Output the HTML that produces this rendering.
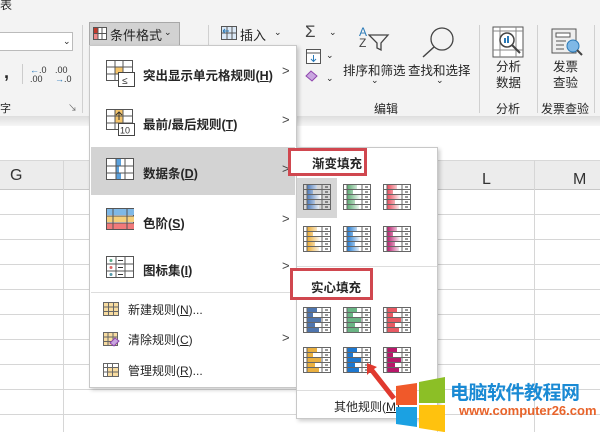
<!DOCTYPE html>
<html><head><meta charset="utf-8"><style>
*{margin:0;padding:0;box-sizing:border-box}
body{width:600px;height:432px;overflow:hidden;position:relative;background:#fff;font-family:"Liberation Sans","Noto Sans CJK SC",sans-serif;color:#262626}
.a{position:absolute}
.t{position:absolute;font-size:12px;white-space:nowrap}
.b{font-weight:bold;font-size:12.5px}
.arr{position:absolute;font-size:13px;color:#444;left:282px}
</style></head><body>
<!-- ribbon -->
<div class="a" style="left:0;top:0;width:600px;height:120px;background:#f3f3f3"></div>
<div class="a" style="left:0;top:116px;width:600px;height:10px;background:linear-gradient(#dedede,#f6f6f6)"></div>
<div class="t" style="left:0;top:-4px;font-size:12px">表</div>
<div class="a" style="left:0;top:32px;width:73px;height:19px;background:#fff;border:1px solid #bbb;border-left:none"></div>
<div class="t" style="left:63px;top:36px;font-size:9px">⌄</div>
<div class="t" style="left:4px;top:62px;font-size:18px;font-weight:bold">,</div>
<div class="a" style="left:22px;top:64px;width:1px;height:20px;background:#ccc"></div>
<div class="t" style="left:30px;top:66px;font-size:9px;line-height:9px;color:#333"><span style="color:#2a7ab8">←</span>.0<br>.00</div>
<div class="t" style="left:55px;top:66px;font-size:9px;line-height:9px;color:#333">.00<br><span style="color:#2a7ab8">→</span>.0</div>
<div class="t" style="left:0;top:100px;font-size:11px">字</div>
<div class="t" style="left:68px;top:101px;font-size:9px;color:#666">↘</div>
<div class="a" style="left:82px;top:25px;width:1px;height:88px;background:#d0d0d0"></div>
<div class="a" style="left:208px;top:25px;width:1px;height:88px;background:#d0d0d0"></div>
<div class="a" style="left:89px;top:22px;width:91px;height:24px;background:#d2d2d2;border:1px solid #a8a8a8"></div>
<svg class="a" style="left:93px;top:27px" width="14" height="13"><rect x=".5" y=".5" width="13" height="12" fill="#fff" stroke="#555"/><rect x="1" y="1" width="4" height="5" fill="#c0392b"/><rect x="1" y="7" width="4" height="5" fill="#e88"/><path d="M5 1v12M9 1v12M1 6.5h13" stroke="#555"/></svg>
<div class="t" style="left:110px;top:25px;font-size:13px">条件格式</div>
<div class="t" style="left:164px;top:27px;font-size:9px">⌄</div>
<svg class="a" style="left:221px;top:26px" width="16" height="14"><rect x=".5" y=".5" width="15" height="13" fill="#dbe9f7" stroke="#555"/><path d="M6 1v13M11 1v13M1 7h15" stroke="#555"/><path d="M2 5h6M2 5l2-2M2 5l2 2" stroke="#2a7ab8" fill="none"/></svg>
<div class="t" style="left:240px;top:25px;font-size:13px">插入</div>
<div class="t" style="left:274px;top:27px;font-size:9px">⌄</div>
<div class="t" style="left:305px;top:22px;font-size:17px;color:#444">Σ</div><div class="t" style="left:329px;top:27px;font-size:9px">⌄</div>
<svg class="a" style="left:306px;top:49px" width="15" height="15"><rect x=".5" y=".5" width="14" height="14" fill="#fff" stroke="#555"/><path d="M1 4h14" stroke="#555"/><path d="M7.5 6v6M5 10l2.5 2.5L10 10" stroke="#2a7ab8" fill="none"/></svg><div class="t" style="left:326px;top:50px;font-size:9px">⌄</div>
<svg class="a" style="left:305px;top:70px" width="16" height="12"><path d="M1 6l5-5 6 5-5 5z" fill="#c9a6e0" stroke="#8e44ad"/></svg><div class="t" style="left:326px;top:73px;font-size:9px">⌄</div>
<div class="t" style="left:359px;top:27px;font-size:12px;line-height:11px;color:#2a7ab8">A<br><span style="color:#444">Z</span></div>
<svg class="a" style="left:368px;top:34px" width="22" height="18"><path d="M1 1h19l-7 8v7l-4-2V9z" fill="none" stroke="#444" stroke-width="1.3"/></svg>
<svg class="a" style="left:420px;top:26px" width="36" height="32"><circle cx="22" cy="13" r="11" fill="none" stroke="#444" stroke-width="1.3"/><path d="M14 21L3 31" stroke="#444" stroke-width="1.5"/></svg>
<div class="t" style="left:343px;top:60px;font-size:12.5px">排序和筛选</div>
<div class="t" style="left:408px;top:60px;font-size:12.5px">查找和选择</div>
<div class="t" style="left:371px;top:75px;font-size:9px">⌄</div><div class="t" style="left:436px;top:75px;font-size:9px">⌄</div>
<div class="t" style="left:374px;top:100px;font-size:12px">编辑</div>
<div class="a" style="left:479px;top:25px;width:1px;height:88px;background:#d0d0d0"></div>
<svg class="a" style="left:492px;top:26px" width="34" height="32"><rect x="1" y="1" width="30" height="30" fill="#fff" stroke="#555"/><path d="M1 5h30M8 1v30M24 1v30M1 24h30" stroke="#888"/><circle cx="15" cy="14" r="7" fill="#fff" stroke="#444" stroke-width="1.5"/><rect x="12" y="12" width="2" height="5" fill="#2a7ab8"/><rect x="15" y="10" width="2" height="7" fill="#2a7ab8"/><path d="M20 19l8 8" stroke="#444" stroke-width="2"/></svg>
<div class="t" style="left:496px;top:59px;font-size:12.5px;line-height:16px;text-align:center">分析<br>数据</div>
<div class="t" style="left:496px;top:100px;font-size:12px">分析</div>
<div class="a" style="left:537px;top:25px;width:1px;height:88px;background:#d0d0d0"></div>
<svg class="a" style="left:551px;top:28px" width="34" height="28"><rect x="1" y="1" width="24" height="24" fill="#eee" stroke="#555"/><rect x="5" y="5" width="14" height="4" fill="#fff" stroke="#555"/><path d="M5 13h10M5 17h8M5 21h8" stroke="#555"/><circle cx="22" cy="18" r="6" fill="#7fb8e6" stroke="#2a7ab8"/><path d="M26 22l5 5" stroke="#444" stroke-width="2"/></svg>
<div class="t" style="left:553px;top:59px;font-size:12.5px;line-height:16px">发票<br>查验</div>
<div class="t" style="left:541px;top:100px;font-size:12px">发票查验</div>
<div class="a" style="left:594px;top:25px;width:1px;height:88px;background:#d0d0d0"></div>
<!-- sheet -->
<div class="a" style="left:0;top:160px;width:600px;height:30px;background:#ececec;border-top:1px solid #d8d8d8;border-bottom:1px solid #c8c8c8"></div>
<div class="t" style="left:10px;top:167px;font-size:16px;color:#333">G</div>
<div class="t" style="left:482px;top:171px;font-size:16px;color:#333">L</div>
<div class="t" style="left:573px;top:171px;font-size:16px;color:#333">M</div>
<div class="a" style="left:0;top:190px;width:600px;height:242px;background:repeating-linear-gradient(#fff 0 24px,#d6d6d6 24px 25px),#fff"></div>
<div class="a" style="left:63px;top:160px;width:1px;height:272px;background:#d6d6d6"></div>
<div class="a" style="left:437px;top:160px;width:1px;height:272px;background:#d6d6d6"></div>
<div class="a" style="left:534px;top:160px;width:1px;height:272px;background:#d6d6d6"></div>
<!-- main menu -->
<div class="a" style="left:89px;top:45px;width:208px;height:343px;background:#fff;border:1px solid #c8c8c8;box-shadow:2px 2px 4px rgba(0,0,0,.2)"></div>
<div class="a" style="left:91px;top:147px;width:204px;height:48px;background:#d3d3d3"></div>
<svg class="a" style="left:106px;top:60px" width="30" height="28"><rect x=".5" y=".5" width="26" height="20" fill="#fff" stroke="#555"/><rect x="9" y="7" width="8" height="7" fill="#f5c56b"/><path d="M9 1v20M17 1v20M1 7h26M1 14h26" stroke="#555"/><rect x="12.5" y="12.5" width="16" height="14" fill="#fff" stroke="#444"/><text x="16" y="24" font-size="10" fill="#333">≤</text></svg>
<div class="t b" style="left:143px;top:65px">突出显示单元格规则(<u>H</u>)</div><div class="arr" style="top:63px">&gt;</div>
<svg class="a" style="left:106px;top:109px" width="30" height="28"><rect x=".5" y=".5" width="26" height="20" fill="#fff" stroke="#555"/><rect x="9" y="1" width="8" height="13" fill="#f5c56b"/><path d="M9 1v20M17 1v20M1 7h26M1 14h26" stroke="#555"/><path d="M13 11V3M10 6l3-3 3 3" stroke="#333" fill="none"/><rect x="12.5" y="14.5" width="16" height="12" fill="#fff" stroke="#444"/><text x="14" y="24.5" font-size="9" fill="#333">10</text></svg>
<div class="t b" style="left:143px;top:114px">最前/最后规则(<u>T</u>)</div><div class="arr" style="top:112px">&gt;</div>
<svg class="a" style="left:106px;top:158px" width="30" height="24"><rect x=".5" y=".5" width="27" height="21" fill="#fff" stroke="#555"/><rect x="10" y="1" width="5" height="7" fill="#5aa0dc"/><rect x="10" y="8" width="3" height="7" fill="#5aa0dc"/><rect x="10" y="15" width="5" height="6" fill="#5aa0dc"/><path d="M10 1v21M19 1v21M1 8h27M1 15h27" stroke="#555"/></svg>
<div class="t b" style="left:143px;top:163px">数据条(<u>D</u>)</div><div class="arr" style="top:161px">&gt;</div>
<svg class="a" style="left:106px;top:208px" width="30" height="24"><rect x=".5" y=".5" width="27" height="21" fill="#fff" stroke="#555"/><rect x="1" y="1" width="27" height="6" fill="#7fb8e6"/><rect x="1" y="8" width="27" height="6" fill="#f5cf7a"/><rect x="1" y="15" width="27" height="6" fill="#f07a7a"/><path d="M7 1v21M21 1v21M1 8h27M1 15h27" stroke="#555"/></svg>
<div class="t b" style="left:143px;top:213px">色阶(<u>S</u>)</div><div class="arr" style="top:211px">&gt;</div>
<svg class="a" style="left:106px;top:256px" width="30" height="24"><rect x=".5" y=".5" width="27" height="21" fill="#fff" stroke="#555"/><path d="M10 1v21M19 1v21M1 8h27M1 15h27" stroke="#555"/><circle cx="5" cy="4.5" r="1.5" fill="#5a8"/><circle cx="5" cy="11.5" r="1.5" fill="#d66"/><circle cx="5" cy="18.5" r="1.5" fill="#59a"/><path d="M12 4.5h5M12 11.5h5M12 18.5h5" stroke="#333"/></svg>
<div class="t b" style="left:143px;top:260px">图标集(<u>I</u>)</div><div class="arr" style="top:258px">&gt;</div>
<div class="a" style="left:91px;top:292px;width:204px;height:1px;background:#ddd"></div>
<svg class="a" style="left:103px;top:302px" width="16" height="14"><rect x=".5" y=".5" width="15" height="13" fill="#f8dca0" stroke="#666"/><path d="M5.5 1v13M10.5 1v13M1 5h15M1 9.5h15" stroke="#666"/></svg>
<div class="t" style="left:128px;top:301px">新建规则(<u>N</u>)...</div>
<svg class="a" style="left:103px;top:332px" width="17" height="15"><rect x=".5" y=".5" width="14" height="13" fill="#f8dca0" stroke="#666"/><path d="M5 1v13M10 1v13M1 5h14M1 9.5h14" stroke="#666"/><path d="M7 11l5-5 4 3-5 5z" fill="#c9a6e0" stroke="#8e44ad"/></svg>
<div class="t" style="left:128px;top:331px">清除规则(<u>C</u>)</div><div class="arr" style="top:330px">&gt;</div>
<svg class="a" style="left:103px;top:363px" width="16" height="14"><rect x=".5" y=".5" width="15" height="13" fill="#fff" stroke="#666"/><rect x="4" y="4" width="11" height="9" fill="#f8dca0"/><path d="M4.5 1v13M9.5 1v13M1 4.5h15M1 9h15" stroke="#666"/></svg>
<div class="t" style="left:128px;top:362px">管理规则(<u>R</u>)...</div>
<!-- submenu -->
<div class="a" style="left:296px;top:147px;width:142px;height:272px;background:#fff;border:1px solid #c8c8c8;box-shadow:2px 2px 4px rgba(0,0,0,.2)"></div>
<div class="a" style="left:288px;top:148px;width:79px;height:28px;border:3px solid #d0474f;background:#fff"></div>
<div class="t b" style="left:312px;top:153px">渐变填充</div>
<div class="a" style="left:297px;top:178px;width:40px;height:40px;background:#d6d6d6"></div>
<div class="a" style="left:297px;top:266px;width:140px;height:1px;background:#ddd"></div>
<div class="a" style="left:290px;top:268px;width:83px;height:32px;border:3px solid #d0474f;background:#fff"></div>
<div class="t b" style="left:311px;top:277px">实心填充</div>
<div class="a" style="left:297px;top:390px;width:140px;height:1px;background:#ddd"></div>
<div class="t" style="left:334px;top:398px">其他规则(<u>M</u>)...</div>
<svg class="a" style="left:0;top:0" width="600" height="432">
<defs>
<linearGradient id="g1"><stop offset="0" stop-color="#4a78b8"/><stop offset="1" stop-color="#fff"/></linearGradient>
<linearGradient id="g2"><stop offset="0" stop-color="#5aaa70"/><stop offset="1" stop-color="#fff"/></linearGradient>
<linearGradient id="g3"><stop offset="0" stop-color="#e84a5a"/><stop offset="1" stop-color="#fff"/></linearGradient>
<linearGradient id="g4"><stop offset="0" stop-color="#eaa930"/><stop offset="1" stop-color="#fff"/></linearGradient>
<linearGradient id="g5"><stop offset="0" stop-color="#1e78d0"/><stop offset="1" stop-color="#fff"/></linearGradient>
<linearGradient id="g6"><stop offset="0" stop-color="#b8186a"/><stop offset="1" stop-color="#fff"/></linearGradient>
<g id="grid"><rect x=".5" y=".5" width="27" height="25" fill="none" stroke="#666"/><path d="M4 1v25M19 1v25M1 5.5h27M1 10.5h27M1 15.5h27M1 20.5h27" stroke="#666"/><path d="M22 3h3M22 8h3M22 13h3M22 18h3M22 23h3" stroke="#333"/></g>
</defs>
<g transform="translate(303,184)"><path d="M4 1h10v5H4zM4 6h6v5H4zM4 11h14v5H4zM4 16h8v5H4zM4 21h12v5H4z" fill="url(#g1)"/><use href="#grid"/></g>
<g transform="translate(343,184)"><path d="M4 1h10v5H4zM4 6h6v5H4zM4 11h14v5H4zM4 16h8v5H4zM4 21h12v5H4z" fill="url(#g2)"/><use href="#grid"/></g>
<g transform="translate(383,184)"><path d="M4 1h10v5H4zM4 6h6v5H4zM4 11h14v5H4zM4 16h8v5H4zM4 21h12v5H4z" fill="url(#g3)"/><use href="#grid"/></g>
<g transform="translate(303,226)"><path d="M4 1h10v5H4zM4 6h6v5H4zM4 11h14v5H4zM4 16h8v5H4zM4 21h12v5H4z" fill="url(#g4)"/><use href="#grid"/></g>
<g transform="translate(343,226)"><path d="M4 1h10v5H4zM4 6h6v5H4zM4 11h14v5H4zM4 16h8v5H4zM4 21h12v5H4z" fill="url(#g5)"/><use href="#grid"/></g>
<g transform="translate(383,226)"><path d="M4 1h10v5H4zM4 6h6v5H4zM4 11h14v5H4zM4 16h8v5H4zM4 21h12v5H4z" fill="url(#g6)"/><use href="#grid"/></g>
<g transform="translate(303,307)"><path d="M4 1h10v5H4zM4 6h6v5H4zM4 11h14v5H4zM4 16h8v5H4zM4 21h12v5H4z" fill="#4f75ae"/><use href="#grid"/></g>
<g transform="translate(343,307)"><path d="M4 1h10v5H4zM4 6h6v5H4zM4 11h14v5H4zM4 16h8v5H4zM4 21h12v5H4z" fill="#6bb585"/><use href="#grid"/></g>
<g transform="translate(383,307)"><path d="M4 1h10v5H4zM4 6h6v5H4zM4 11h14v5H4zM4 16h8v5H4zM4 21h12v5H4z" fill="#e85a64"/><use href="#grid"/></g>
<g transform="translate(303,347)"><path d="M4 1h10v5H4zM4 6h6v5H4zM4 11h14v5H4zM4 16h8v5H4zM4 21h12v5H4z" fill="#eab040"/><use href="#grid"/></g>
<g transform="translate(343,347)"><path d="M4 1h10v5H4zM4 6h6v5H4zM4 11h14v5H4zM4 16h8v5H4zM4 21h12v5H4z" fill="#1e78d0"/><use href="#grid"/></g>
<g transform="translate(383,347)"><path d="M4 1h10v5H4zM4 6h6v5H4zM4 11h14v5H4zM4 16h8v5H4zM4 21h12v5H4z" fill="#b8186a"/><use href="#grid"/></g>
<!-- arrow -->
<path d="M367 363l10 4-3 2 22 28-4 3-22-28-3 3z" fill="#e0392e"/>
<!-- windows logo -->
<path d="M396 386l21-3v22l-21 0z" fill="#f0592a"/>
<path d="M419 382l26-5v26h-26z" fill="#8cbf26"/>
<path d="M396 407h21v20l-21-3z" fill="#1ba1e2"/>
<path d="M419 405h26v27h-1l-25-4z" fill="#ffc20e"/>
</svg>
<div class="t" style="left:450px;top:378px;font-size:19px;font-weight:bold;color:#1a8ad4;letter-spacing:-0.5px">电脑软件教程网</div>
<div class="t" style="left:459px;top:403px;font-size:13px;font-weight:bold;color:#e8632a">www.computer26.com</div>
</body></html>
